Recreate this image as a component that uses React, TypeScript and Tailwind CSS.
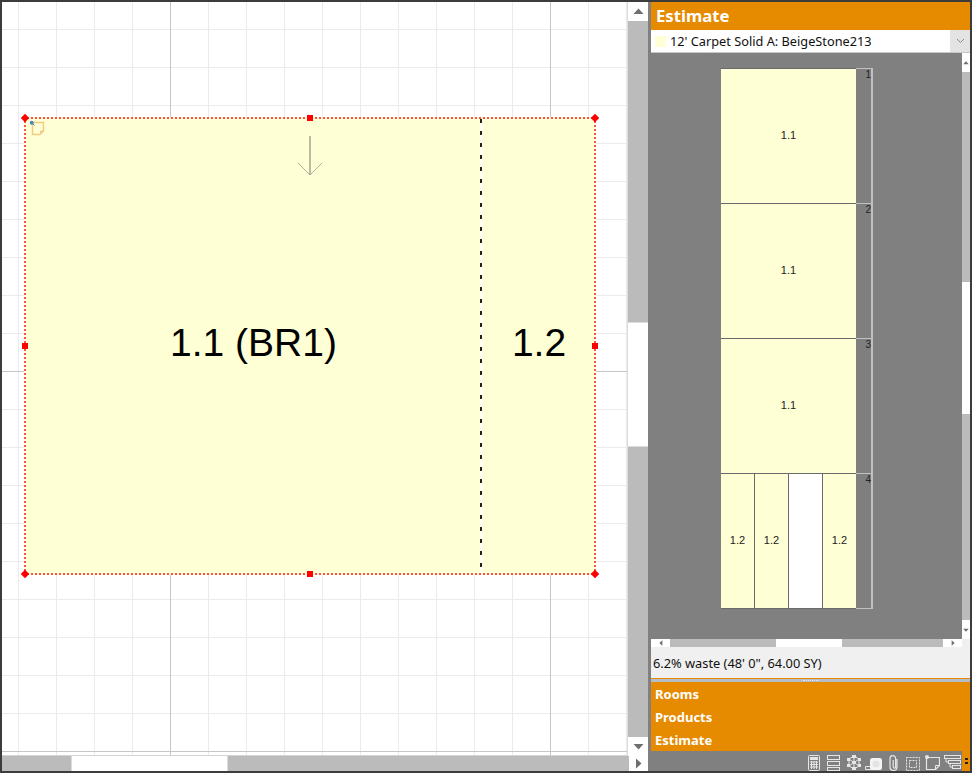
const ui = '[font-family:"Noto_Sans","Open_Sans",sans-serif]'

function Tri({ dir, size = 11 }: { dir: 'up' | 'down' | 'left' | 'right'; size?: number }) {
  const pts = {
    up: '5.5,2.5 0.5,8 10.5,8',
    down: '0.5,3 10.5,3 5.5,8.5',
    left: '8,0.5 8,10.5 2.5,5.5',
    right: '3,0.5 3,10.5 8.5,5.5',
  }[dir]
  return (
    <svg width={size} height={size} viewBox="0 0 11 11">
      <polygon points={pts} fill="#6e6e6e" />
    </svg>
  )
}

function Handle({ className, diamond }: { className: string; diamond?: boolean }) {
  return (
    <div
      className={`absolute h-[6px] w-[6px] bg-[#ff0000] ${diamond ? 'rotate-45' : ''} ${className}`}
    />
  )
}

function Drawing() {
  return (
    <div className="absolute left-[22px] top-[115px] flex h-[458px] w-[572px] border-2 border-dotted border-[#ff5050] bg-[#ffffd5]">
      {/* first cut */}
      <div className="relative flex w-[454px] items-center justify-center pb-[8px] pl-[1px]">
        <span className="font-['Liberation_Sans',sans-serif] text-[39px] leading-none text-black">
          1.1 (BR1)
        </span>
        {/* note + magnifier */}
        <svg className="absolute left-[3px] top-[1px]" width="17" height="17" viewBox="0 0 17 17">
          <path d="M3.5 2.5h11v8.5l-3.5 3.5h-7.5z" fill="none" stroke="#f0cd84" strokeWidth="1.5" />
          <path d="M11.5 14v-3h3" fill="#f0cd84" stroke="#f0cd84" />
          <circle cx="2.7" cy="2.7" r="2" fill="#4f86bd" />
          <path d="M4 4l1.5 1.5" stroke="#4f86bd" />
        </svg>
        {/* direction arrow */}
        <svg className="absolute left-[271px] top-[16px]" width="26" height="42" viewBox="0 0 26 42">
          <path d="M13 1v39" stroke="#a6a690" strokeWidth="1.5" fill="none" />
          <path d="M1 28l12 12 12-12" stroke="#9a9a8c" strokeWidth="0.8" fill="none" />
        </svg>
      </div>
      <div className="w-[2px] bg-[repeating-linear-gradient(to_bottom,#222_0_4px,#fff_4px_12px)]" />
      <div className="flex flex-1 items-center justify-center pb-[8px] pl-[2px]">
        <span className="font-['Liberation_Sans',sans-serif] text-[39px] leading-none text-black">
          1.2
        </span>
      </div>

      <Handle diamond className="left-[-4px] top-[-4px]" />
      <Handle diamond className="right-[-4px] top-[-4px]" />
      <Handle diamond className="bottom-[-4px] left-[-4px]" />
      <Handle diamond className="bottom-[-4px] right-[-4px]" />
      <Handle className="left-[281px] top-[-4px]" />
      <Handle className="bottom-[-4px] left-[281px]" />
      <Handle className="left-[-4px] top-[224px]" />
      <Handle className="right-[-4px] top-[224px]" />
    </div>
  )
}

function SeamRow({ n, end, children }: { n: number; end?: boolean; children: React.ReactNode }) {
  return (
    <div className={`flex ${end ? 'h-[136px]' : 'h-[135px]'}`}>
      <div className={`flex w-[135px] border-t border-[#6a6a6a] ${end ? 'border-b' : ''}`}>
        {children}
      </div>
      <div
        className={`w-[17px] border-r-2 border-t border-[#c0c0c0] bg-[#7f7f7f] text-right font-['Liberation_Sans',sans-serif] text-[10px] leading-[12px] text-[#222] ${
          end ? 'border-b' : ''
        }`}
      >
        {n}
      </div>
    </div>
  )
}

function Cell({ label, blank, last }: { label?: string; blank?: boolean; last?: boolean }) {
  return (
    <div
      className={`flex flex-1 items-center justify-center pb-[2px] font-['Liberation_Sans',sans-serif] text-[11px] text-[#222] ${
        blank ? 'bg-white' : 'bg-[#ffffd5]'
      } ${last ? '' : 'border-r border-[#6a6a6a]'}`}
    >
      {label}
    </div>
  )
}

function ToolIcons() {
  const s = '#e6e6e6'
  return (
    <div className="flex h-[20px] flex-1 items-start justify-end bg-[#808080] pr-[1px] pt-[4px]">
      {/* calculator */}
      <svg width="12" height="16" viewBox="0 0 12 16">
        <rect x="0.5" y="0.5" width="11" height="15" rx="1" fill="none" stroke={s} />
        <rect x="2" y="2" width="8" height="3" fill={s} />
        <path d="M2 7h8M2 9.5h8M2 12h8M3.5 6v8M6 6v8M8.5 6v8" stroke={s} fill="none" />
      </svg>
      {/* rows */}
      <svg width="13" height="16" viewBox="0 0 13 16" className="ml-[7px]">
        <rect x="0.5" y="0.5" width="12" height="4" fill="none" stroke={s} />
        <rect x="0.5" y="6.5" width="12" height="4" fill="none" stroke={s} />
        <rect x="0.5" y="12.5" width="12" height="3" fill="none" stroke={s} />
      </svg>
      {/* cube network */}
      <svg width="14" height="15" viewBox="0 0 14 15" className="ml-[7px]">
        <path d="M7 1l5 3v7l-5 3-5-3V4zM2 4l10 7M12 4L2 11M7 1v13" fill="none" stroke={s} />
        <rect x="5" y="0" width="4" height="3" fill={s} />
        <rect x="0" y="3" width="3" height="3" fill={s} />
        <rect x="11" y="3" width="3" height="3" fill={s} />
        <rect x="0" y="9" width="3" height="3" fill={s} />
        <rect x="11" y="9" width="3" height="3" fill={s} />
        <rect x="5" y="12" width="4" height="3" fill={s} />
        <rect x="5" y="6" width="4" height="3" fill={s} />
      </svg>
      {/* stamp */}
      <svg width="17" height="13" viewBox="0 0 17 13" className="ml-[4px] mt-[2px]">
        <path d="M0.5 12.5v-3h5" fill="none" stroke={s} />
        <path d="M0.5 12.5h8" stroke={s} />
        <rect x="5" y="1" width="12" height="12" rx="2.5" fill="#f4f4f4" />
        <circle cx="11" cy="7" r="3.5" fill="#e4e4e4" />
      </svg>
      {/* clip */}
      <svg width="9" height="16" viewBox="0 0 9 16" className="ml-[7px]">
        <path
          d="M8 4v8a3.5 3.5 0 0 1-7 0V3.5a2.8 2.8 0 0 1 5.6 0V12a1.2 1.2 0 0 1-2.4 0V5"
          fill="none"
          stroke={s}
          strokeWidth="1.2"
        />
      </svg>
      {/* dashed selection */}
      <svg width="14" height="14" viewBox="0 0 14 14" className="ml-[8px] mt-[2px]">
        <rect x="0.5" y="0.5" width="13" height="13" fill="none" stroke={s} strokeDasharray="2 1" />
        <rect x="3.5" y="3.5" width="7" height="7" fill="none" stroke={s} strokeDasharray="2 1" />
      </svg>
      {/* note */}
      <svg width="15" height="15" viewBox="0 0 15 15" className="ml-[5px]">
        <path d="M1.5 2.5h13v8l-4 4h-9z" fill="none" stroke={s} strokeWidth="1.2" />
        <path d="M10.5 14.5v-4h4" fill="none" stroke={s} />
        <circle cx="2" cy="2" r="2" fill={s} />
      </svg>
      {/* tree */}
      <svg width="17" height="15" viewBox="0 0 17 15" className="ml-[4px]">
        <rect x="0.5" y="0.5" width="16" height="3" fill="none" stroke={s} />
        <rect x="4.5" y="5.5" width="12" height="3" fill="none" stroke={s} />
        <rect x="8.5" y="10.5" width="8" height="3" fill="none" stroke={s} />
        <path d="M2 4v3h2M6 9v3h2" fill="none" stroke={s} />
      </svg>
    </div>
  )
}

export default function App() {
  return (
    <div className="flex h-[773px] w-[972px] overflow-hidden border-2 border-[#3c3c3c] bg-[#808080]">
      {/* Left: drawing canvas */}
      <div className="flex w-[646px] flex-col">
        <div className="flex h-[754px]">
          <div className="relative w-[625px] border-b border-[#d4d4d4] bg-white [background-image:linear-gradient(to_right,#c6c6c6_1px,transparent_1px),linear-gradient(to_bottom,#c6c6c6_1px,transparent_1px),linear-gradient(to_right,#ebebeb_1px,transparent_1px),linear-gradient(to_bottom,#ebebeb_1px,transparent_1px)] [background-position:168px_0,0_369px,16px_0,0_27px] [background-size:380px_380px,380px_380px,38px_38px,38px_38px]">
            <Drawing />
          </div>
          {/* vertical scrollbar */}
          <div className="flex w-[21px] flex-col border-l border-[#dcdcdc] bg-[#bbbbbb]">
            <div className="flex h-[19px] items-center justify-center bg-white">
              <Tri dir="up" />
            </div>
            <div className="mt-[301px] h-[125px] border-y border-[#dcdcdc] bg-white" />
            <div className="mt-auto flex h-[19px] items-center justify-center bg-white">
              <Tri dir="down" />
            </div>
          </div>
        </div>
        {/* horizontal scrollbar */}
        <div className="flex h-[15px] bg-[#bbbbbb]">
          <div className="ml-[69px] w-[157px] border-x border-[#dcdcdc] bg-white" />
          <div className="ml-auto flex w-[19px] items-center justify-center bg-white">
            <Tri dir="right" />
          </div>
        </div>
      </div>

      <div className="w-[3px] bg-[#808080]" />

      {/* Right: estimate panel */}
      <div className={`flex w-[319px] flex-col ${ui}`}>
        <div className="flex h-[28px] items-center bg-[#e68a00] pl-[5px] text-[16.7px] font-bold leading-none text-white">
          Estimate
        </div>
        <div className="flex h-[23px] items-center border-b border-[#c8c8c8] bg-white pl-[4px]">
          <div className="h-[11px] w-[11px] bg-[#ffffd5]" />
          <span className="ml-[4px] text-[12.75px] leading-none text-[#111]">
            12' Carpet Solid A: BeigeStone213
          </span>
          <div className="ml-auto flex h-full w-[20px] items-center justify-center bg-[#e3e3e3]">
            <svg width="9" height="6" viewBox="0 0 9 6">
              <path d="M1 1l3.5 3.5L8 1" fill="none" stroke="#8a8a8a" />
            </svg>
          </div>
        </div>

        {/* seam layout viewport */}
        <div className="flex h-[586px]">
          <div className="flex-1 bg-[#808080] pl-[70px] pt-[15px]">
            <SeamRow n={1}>
              <Cell label="1.1" last />
            </SeamRow>
            <SeamRow n={2}>
              <Cell label="1.1" last />
            </SeamRow>
            <SeamRow n={3}>
              <Cell label="1.1" last />
            </SeamRow>
            <SeamRow n={4} end>
              <Cell label="1.2" />
              <Cell label="1.2" />
              <Cell blank />
              <Cell label="1.2" last />
            </SeamRow>
          </div>
          <div className="flex w-[8px] flex-col bg-[#bbbbbb]">
            <div className="flex h-[19px] items-center justify-center bg-white">
              <Tri dir="up" size={6} />
            </div>
            <div className="mt-[210px] h-[132px] bg-white" />
            <div className="mt-auto flex h-[19px] items-center justify-center bg-white">
              <Tri dir="down" size={6} />
            </div>
          </div>
        </div>
        <div className="flex h-[8px] bg-[#bbbbbb]">
          <div className="flex w-[19px] items-center justify-center bg-white">
            <Tri dir="left" size={6} />
          </div>
          <div className="ml-[106px] w-[66px] bg-white" />
          <div className="ml-auto flex w-[19px] items-center justify-center bg-white">
            <Tri dir="right" size={6} />
          </div>
          <div className="w-[8px] bg-[#f0f0f0]" />
        </div>

        <div className="flex h-[31px] items-center bg-[#f0f0f0] pl-[2px] pt-[1px] text-[12.8px] leading-none text-[#111]">
          6.2% waste (48' 0", 64.00 SY)
        </div>
        <div className="flex h-[4px] justify-center border-t border-[#e68a00] bg-[#b4bcc8] pt-[1px]">
          <div className="h-[1px] w-[16px] border-t border-dotted border-[#e8e8e8]" />
        </div>

        <div className="flex h-[69px] flex-col bg-[#e68a00] pl-[4px] text-[13px] font-bold text-white">
          <div className="h-[23px] leading-[25px]">Rooms</div>
          <div className="h-[23px] leading-[25px]">Products</div>
          <div className="h-[23px] leading-[25px]">Estimate</div>
        </div>

        <div className="flex h-[20px]">
          <ToolIcons />
          <div className="flex w-[8px] flex-col items-center justify-center gap-[2px] bg-[#e68a00]">
            <div className="h-[2px] w-[3px] bg-[#222]" />
            <div className="h-[2px] w-[3px] bg-[#222]" />
          </div>
        </div>
      </div>
    </div>
  )
}
